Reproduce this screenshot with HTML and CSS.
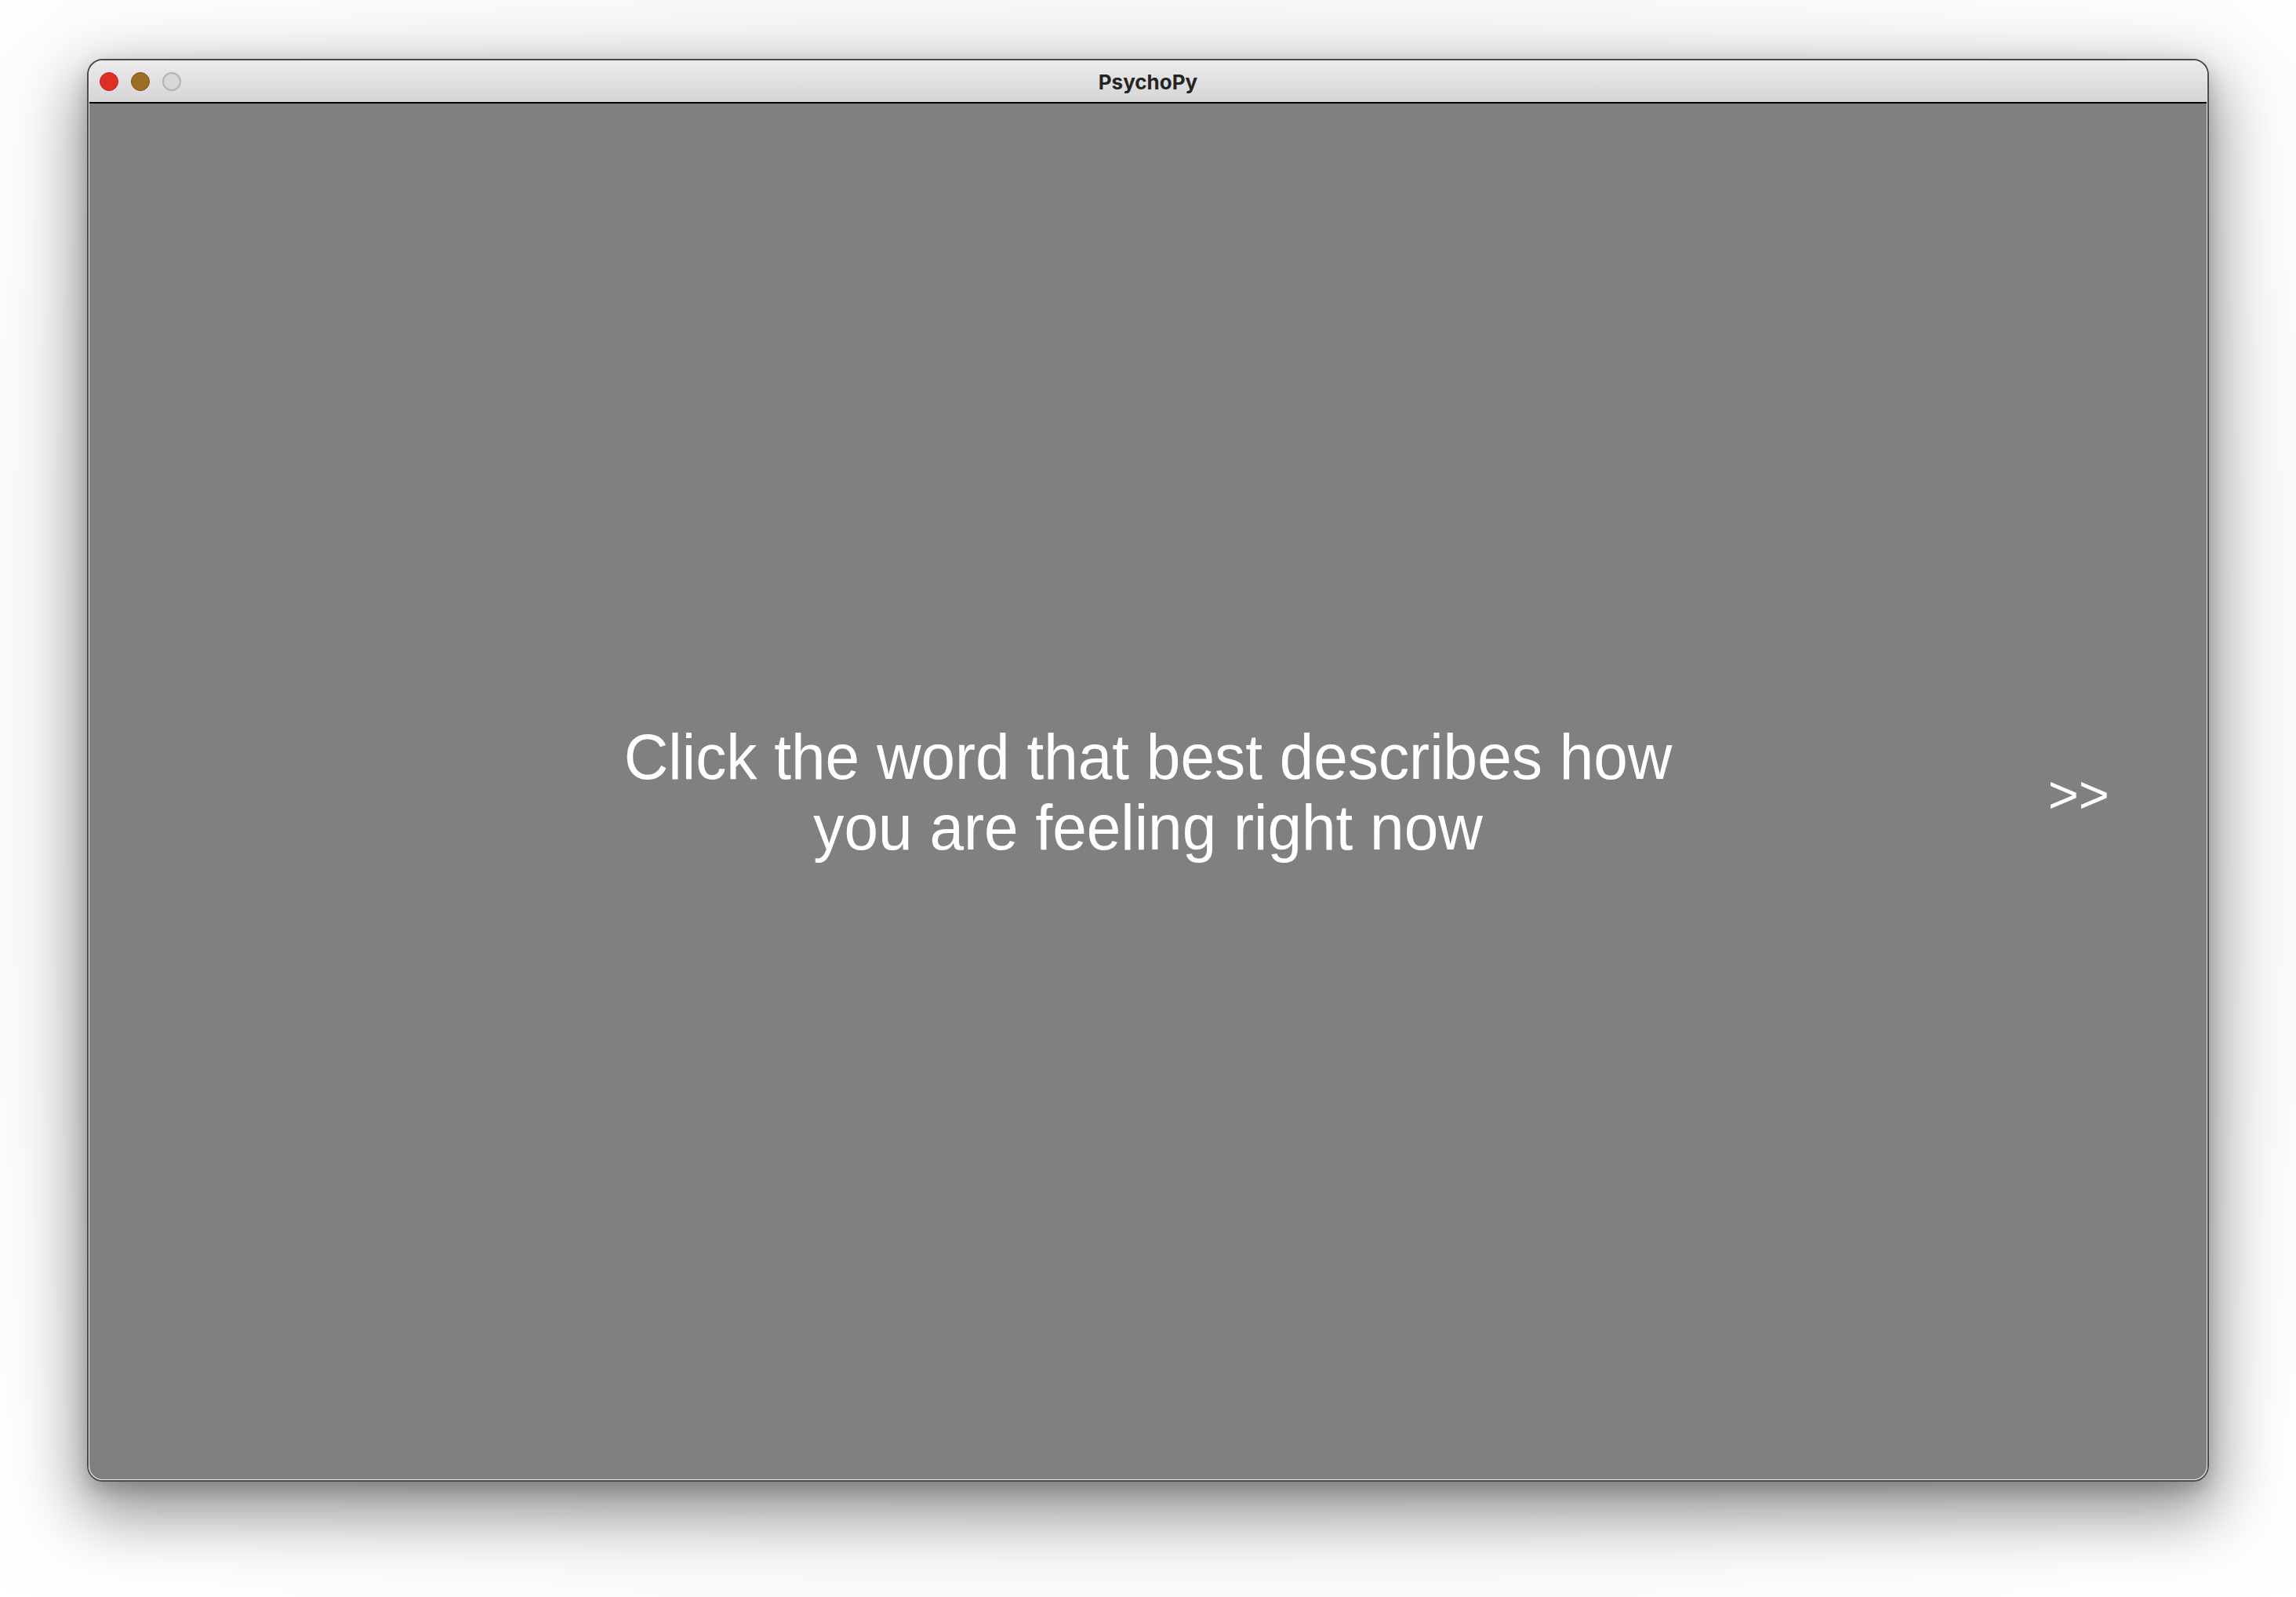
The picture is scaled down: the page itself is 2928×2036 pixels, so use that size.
FILE: index.html
```html
<!DOCTYPE html>
<html>
<head>
<meta charset="utf-8">
<link rel="stylesheet" href="styles.css">
</head>
<body>
<div class="page">
  <div class="window">
    <div class="frame">
      <div class="titlebar">
        <div class="lights">
          <span class="light close"></span>
          <span class="light minimize"></span>
          <span class="light zoom"></span>
        </div>
        <div class="title">PsychoPy</div>
      </div>
      <div class="canvas">
        <div class="spacer"></div>
        <div class="prompt">Click the word that best describes how<br>you are feeling right now</div>
        <div class="next">&gt;&gt;</div>
      </div>
    </div>
  </div>
</div>
</body>
</html>
```

FILE: styles.css
```css
html, body {
  margin: 0;
  padding: 0;
  background: #ffffff;
}

.page {
  width: 2928px;
  height: 2036px;
  padding: 75px 0 0 111px;
  box-sizing: border-box;
  background: radial-gradient(ellipse at 50% 45%, #f1f1f1 0%, #f7f7f7 60%, #ffffff 100%);
}

.window {
  width: 2706px;
  height: 1814px;
  box-sizing: border-box;
  border: 2px solid #4b4b4b;
  border-radius: 20px;
  overflow: hidden;
  box-shadow: 0 32px 80px 10px rgba(0, 0, 0, 0.42), 0 10px 24px rgba(0, 0, 0, 0.18);
}

.frame {
  height: 100%;
  box-sizing: border-box;
  border: 1px solid #e9e9e9;
  border-radius: 18px;
  overflow: hidden;
  display: flex;
  flex-direction: column;
}

.titlebar {
  height: 52px;
  flex: none;
  border-bottom: 2px solid #000;
  background: linear-gradient(#ebebeb, #d5d5d5);
  display: grid;
  grid-template-columns: 1fr auto 1fr;
  align-items: center;
}

.lights {
  display: flex;
  gap: 16px;
  padding-left: 13px;
  align-items: center;
}

.light {
  width: 24px;
  height: 24px;
  border-radius: 50%;
  box-sizing: border-box;
}

.close {
  background: #df2e24;
  border: 1px solid #c4251c;
}

.minimize {
  background: #9b6d27;
  border: 1px solid #7e5418;
}

.zoom {
  background: #d8d8d8;
  border: 2px solid #b3b3b3;
}

.title {
  font-family: Inter, "Noto Sans", sans-serif;
  font-weight: 700;
  font-size: 26px;
  color: #252525;
  padding-top: 1px;
}

.canvas {
  flex: 1;
  background: #808080;
  display: grid;
  grid-template-columns: 1fr auto 1fr;
  align-items: center;
}

.prompt {
  font-family: "Liberation Sans", Arial, sans-serif;
  font-size: 81px;
  line-height: 90px;
  color: #ffffff;
  text-align: center;
  margin-top: 2px;
  transform: scaleX(0.967);
}

.next {
  justify-self: end;
  padding-right: 124px;
  font-family: "Liberation Sans", Arial, sans-serif;
  font-size: 67px;
  color: #ffffff;
  margin-top: 6px;
}
```
